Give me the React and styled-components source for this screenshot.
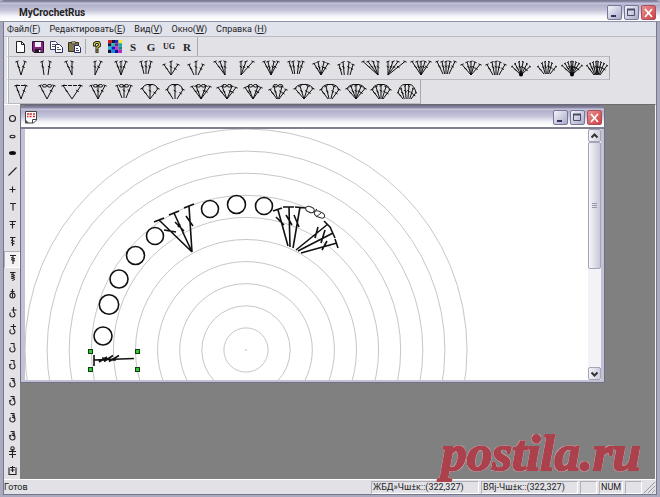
import React, { useState } from "react";
import styled, { createGlobalStyle, css } from "styled-components";

const FAN_ROW = [
  { tops: [-4, 4] },
  { tops: [-4, 4], gap: 2 },
  { tops: [-5, 1], apex: 1 },
  { tops: [-1, 5], apex: -1 },
  { tops: [-5, 0, 5] },
  { tops: [-5, 0, 5], gap: 2, short: true },
  { tops: [-7, 0, 7], arc: 3 },
  { tops: [-7, 0, 7], arc: 3, gap: 2 },
  { tops: [-6, -1, 4], apex: 4 },
  { tops: [-5, 0, 7], apex: -5 },
  { tops: [-7, -3, 3, 7] },
  { tops: [-7, -3, 3, 7], gap: 3, short: true },
  { tops: [-7, -3, 3, 7], arc: 2 },
  { tops: [-7, -3, 3, 7], gap: 4, arc: 3 },
  { tops: [-8, -3, 2, 7], apex: 7 },
  { tops: [-8, -3, 2, 9], apex: -8 },
  { tops: [-9, -4, 0, 4, 9] },
  { tops: [-9, -4, 0, 4, 9], gap: 3, short: true },
  { tops: [-9, -4, 0, 4, 9], arc: 3 },
  { tops: [-9, -4, 0, 4, 9], arc: 3, gap: 3 },
  { tops: [-9, -6, -2, 2, 6, 9], arc: 5, blob: true },
  { tops: [-9, -5, -2, 2, 5, 9], arc: 5, gap: 3, short: true },
  { tops: [-10, -7, -4, -1, 1, 4, 7, 10], arc: 4, blob: true },
  { tops: [-10, -7, -4, -1, 1, 4, 7, 10], arc: 4, gap: 3 },
];

const SHELL_ROW = [
  { tops: [-5, 5], roof: "flat" },
  { tops: [-7, 7], roof: "ovals" },
  { tops: [-9, 9], roof: "flat" },
  { tops: [-7, 0, 7], roof: "ovals" },
  { tops: [-7, 0, 7], roof: "ovals", gap: 2, short: true },
  { tops: [-8, 0, 8], roof: "arc", arc: 3 },
  { tops: [-8, 0, 8], roof: "arc", arc: 4, gap: 2 },
  { tops: [-9, -5, 5, 9], roof: "ovals", arc: 1 },
  { tops: [-9, -5, 5, 9], roof: "ovals", arc: 2 },
  { tops: [-8, -5, 5, 8], roof: "ovals", arc: 2 },
  { tops: [-8, -4, 4, 8], roof: "ovals", arc: 4, gap: 1 },
  { tops: [-9, -4, 4, 9], roof: "arc", arc: 3 },
  { tops: [-9, -4, 4, 9], roof: "arc", arc: 4, gap: 2 },
  { tops: [-9, -5, 0, 5, 9], roof: "arc", arc: 3 },
  { tops: [-9, -5, 0, 5, 9], roof: "arc", arc: 4, gap: 2 },
  { tops: [-9, -6, -2, 2, 6, 9], roof: "arc", arc: 7, gap: 4 },
];

const STITCHES = [
  "chain",
  "slip",
  "solid",
  "slash",
  "single",
  "half",
  "double",
  "treble",
  "treble2",
  "treble3",
  "ring",
  "hook1",
  "hook2",
  "hook3",
  "hook4",
  "hook5",
  "hook6",
  "hook7",
  "hook8",
  "cross",
  "cup",
];

const MENU = [
  ["Файл(", "F", ")"],
  ["Редактировать(", "E", ")"],
  ["Вид(", "V", ")"],
  ["Окно(", "W", ")"],
  ["Справка (", "H", ")"],
];

const CHAINS = [
  [103, 336, 9],
  [109, 304.5, 9.7],
  [119, 279, 9],
  [135.5, 255.5, 9],
  [155, 236, 8.5],
  [210, 209, 8.5],
  [236.5, 204.5, 9],
  [264, 206, 8.5],
];

const Fan = ({ tops, apex = 0, gap = 0, arc = 0, short, blob, roof }) => {
  const widest = Math.max(...tops.map(Math.abs));
  const base = short ? 17 : 18;
  const top = (x) => 4.5 + arc * (x / widest) ** 2;
  return (
    <svg width="24" height="22" viewBox="-12 0 24 22" aria-hidden="true">
      <g fill="none" stroke="#111" strokeWidth="1">
        {tops.map((x) => {
          const bx = apex + (gap * x) / widest;
          const y = top(x);
          const mx = (x * 3 + bx * 2) / 5;
          const my = (y * 3 + base * 2) / 5;
          const cap = tops.length > 5 ? 1 : 1.6;
          return (
            <g key={x}>
              <path d={`M${bx} ${base}L${x} ${y}`} />
              <path
                d={`M${x - cap} ${y + (x > 0 ? -0.6 : 0.6)}L${x + cap} ${
                  y + (x > 0 ? 0.6 : -0.6)
                }`}
              />
              <path d={`M${mx - 1.3} ${my - 0.8}l2.6 1.6`} />
            </g>
          );
        })}
        {roof === "flat" && (
          <path d={`M${-widest} 4.500H${widest}`} strokeDasharray="4 1" />
        )}
        {roof === "ovals" && (
          <>
            <ellipse cx="-2.500" cy="4.800" rx="2.200" ry="1.300" />
            <ellipse cx="2.500" cy="4.800" rx="2.200" ry="1.300" />
          </>
        )}
        {roof === "arc" && (
          <path
            d={`M${-widest} ${4.5 + arc}Q${-widest + 2} 4 -3 3.500H3Q${
              widest - 2
            } 4 ${widest} ${4.5 + arc}`}
          />
        )}
      </g>
      {blob && <circle cx="0" cy="17.500" r="2" fill="#000" />}
    </svg>
  );
};

const hookPath = (n) => {
  const bowl = "C12 10 11 13 8.500 13C6 13 5 10.500 6.500 8.500";
  if (n < 3) {
    return `M9.500 3V8${bowl}M${n === 1 ? "7.500 6H12.500" : "6.500 5.500H12"}`;
  }
  const ticks = Math.ceil(n / 2) - 1;
  let d = `M6.500 4.500H10.500M10 4.500V8${bowl}`;
  for (let i = 1; i < ticks; i++) d += `M8 ${4 + i * 2}l3 1.500`;
  if (n % 2 === 0) d += "M5 9l2.500-1";
  return d;
};

const STITCH_PATHS = {
  slash: "M4.500 12.500L12.500 4.500",
  single: "M5.500 8.500H11.500M8.500 5.500V11.500",
  half: "M6 5.500H12M9 5.500V12.500",
  double: "M5.500 5.500H12M8.500 5.500V12.500M6 8.500H11",
  treble: "M6 4.500H11.500M8.500 4.500V13M7 7L10.500 8.500M7 9.500L10.500 11",
  treble2: "M6 4.500H12M9 4.500V13M7 6.500L11 8M7 8.500L11 10",
  treble3: "M6 4.500H11.500M9 4.500V13M7 6L11 7.500M7 8L11 9.500M7 10L11 11.500",
  cross: "M8.500 5V14M5 7.500H12M5 10.500H12",
  cup: "M5 5.500V12.500H12V5.500M6 5.500H11M8.500 4V10M6.500 8H10.500",
};

const Stitch = ({ kind }) => (
  <svg width="17" height="17" viewBox="0 0 17 17" aria-hidden="true">
    <g fill="none" stroke="#222" strokeWidth="1.100">
      {kind === "chain" && <circle cx="8.500" cy="8.500" r="3" />}
      {kind === "slip" && <ellipse cx="8.500" cy="8.500" rx="2.500" ry="1.300" />}
      {kind === "solid" && (
        <ellipse cx="8.500" cy="8" rx="3" ry="1.500" fill="#000" />
      )}
      {kind === "ring" && (
        <>
          <circle cx="8.500" cy="9.500" r="2.500" />
          <path d="M8.500 3V11.500M6.500 5.500H10.500" />
        </>
      )}
      {kind === "cross" && <circle cx="8.500" cy="4.500" r="1.700" />}
      {kind.startsWith("hook") && <path d={hookPath(Number(kind[4]))} />}
      {STITCH_PATHS[kind] && <path d={STITCH_PATHS[kind]} />}
    </g>
  </svg>
);

const NewIcon = () => (
  <svg width="12" height="12" viewBox="0 0 12 12" aria-hidden="true">
    <path d="M2.500 .5h5l3 3v8h-8z" fill="#fff" stroke="#222" />
    <path d="M7.500 .5v3h3" fill="none" stroke="#222" />
  </svg>
);

const SaveIcon = () => (
  <svg width="12" height="12" viewBox="0 0 12 12" aria-hidden="true">
    <path d="M.5.5h11v11H2L.5 10z" fill="#8a1f86" stroke="#26152e" />
    <path d="M3 1h6v5H3z" fill="#f4eef4" />
    <path d="M3 8h6v3H3z" fill="#1b1b1b" />
    <path d="M7 9h1.500v2H7z" fill="#fff" />
  </svg>
);

const CopyIcon = () => (
  <svg width="13" height="12" viewBox="0 0 13 12" aria-hidden="true">
    <path d="M.5 .5h5l2 2v6h-7z" fill="#fff" stroke="#333a66" />
    <path d="M5.500 3.500h4l3 3v5h-7z" fill="#fff" stroke="#252b66" />
    <path d="M2 3.500h3M2 5.500h3M7 6.500h2M7 8.500h4" stroke="#555" />
  </svg>
);

const PasteIcon = () => (
  <svg width="13" height="12" viewBox="0 0 13 12" aria-hidden="true">
    <path d="M.5 1.500h10v9h-10z" fill="#80774d" stroke="#33301e" />
    <path d="M3.500 .8h4v2h-4z" fill="#ddd58e" stroke="#333" strokeWidth=".8" />
    <path d="M6.500 4.500h4l2 2v5h-6z" fill="#fff" stroke="#252b66" />
    <path d="M8 7.500h2M8 9.500h3" stroke="#3a4070" />
  </svg>
);

const HelpIcon = () => (
  <svg width="10" height="12" viewBox="0 0 10 12" aria-hidden="true">
    <g fill="none" strokeLinecap="square">
      <path d="M2.500 4V2.500L4 1.500h2.500L7.500 3v1.500L5 6.500V8" stroke="#222" strokeWidth="3" />
      <path d="M2.500 4V2.500L4 1.500h2.500L7.500 3v1.500L5 6.500V8" stroke="#d9cf3a" strokeWidth="1.200" />
    </g>
    <path d="M3.500 9.300h3V12h-3z" fill="#222" />
    <path d="M4.500 9.800h1v1.500h-1z" fill="#d9cf3a" />
  </svg>
);

const SWATCHES = [
  "#e01818", "#1a1030", "#2424d8", "#f4f020",
  "#10104a", "#18c8b0", "#7a2090", "#1ba8a0",
  "#12c0d8", "#1818c0", "#d030d0", "#168a80",
  "#101038", "#1c8ae0", "#101090", "#c020c8",
];

const PaletteIcon = () => (
  <svg width="14" height="13" viewBox="0 0 4 4" preserveAspectRatio="none" aria-hidden="true">
    {SWATCHES.map((fill, i) => (
      <rect key={i} x={i % 4} y={Math.floor(i / 4)} width="1" height="1" fill={fill} />
    ))}
  </svg>
);

const DocIcon = () => (
  <svg width="12" height="13" viewBox="0 0 12 13" aria-hidden="true">
    <path d="M.5.500h11v8.500l-3 3h-8z" fill="#fff" stroke="#444" />
    <path d="M2 3h2.500M5 3h2M8 3h2M2 5.500h1.500M4.500 5.500h2M8 5.500h2" stroke="#d02c2c" strokeWidth="1.500" />
    <path d="M11 8.500H7.500V12" fill="none" stroke="#444" />
    <path d="M1 9l3 3h-3z" fill="#555" />
  </svg>
);

const lines = (list) => list.map(([a, b, c, d]) => `M${a} ${b}L${c} ${d}`).join("");

const LEFT_SHELL = lines([
  [192, 252, 159, 220], [192, 252, 174, 213], [192, 252, 189, 206],
  [154, 222, 164, 218], [169, 215, 179, 211], [184, 208, 194, 204],
  [164, 230, 176, 232], [175, 222, 184, 231], [186, 216, 193, 226],
  [180, 224, 178, 227],
]);

const RIGHT_SHELL = lines([
  [288, 246, 278, 210], [290, 247, 289, 207], [293, 248, 300, 207],
  [273, 211, 282, 208], [283, 207, 294, 207], [295, 207, 306, 208],
  [276, 217, 284, 225], [286, 215, 292, 225], [294, 215, 299, 227],
  [296, 250, 328, 224], [298, 251, 333, 233], [301, 253, 337, 243],
  [324, 221, 331, 228], [330, 227, 335, 238], [335, 239, 338, 248],
  [318, 227, 315, 238], [325, 230, 321, 243], [327, 241, 322, 250],
]);

const SELECTED = lines([
  [94, 355, 94, 366], [94, 360, 134, 358.5],
  [99, 362, 107, 357], [104, 361.5, 113, 355.5], [109, 361.5, 119, 355.5],
  [102, 358, 116, 360],
]);

const Pattern = () => (
  <svg width="563" height="251" viewBox="25 129 563 251" role="img" aria-label="Узор">
    <g fill="none" stroke="#c6c6c6" strokeWidth="1">
      {Array.from({ length: 10 }, (_, i) => (
        <circle key={i} cx="246" cy="350" r={(i + 1) * 22.1} />
      ))}
    </g>
    <path d="M245 350h2" stroke="#bbb" />
    <g fill="none" stroke="#111" strokeWidth="1.600">
      {CHAINS.map(([cx, cy, r]) => (
        <circle key={cx} cx={cx} cy={cy} r={r} />
      ))}
      <path d={LEFT_SHELL} />
      <path d={RIGHT_SHELL} />
      <path d={SELECTED} />
    </g>
    <g fill="#fff" stroke="#333" strokeWidth="1">
      <ellipse cx="310" cy="209.500" rx="4.500" ry="2.800" transform="rotate(25 310 209.500)" />
      <ellipse cx="319.500" cy="214.500" rx="5.500" ry="2.800" transform="rotate(25 319.500 214.500)" />
      <path d="M312 213l5-4M316 217l5-4" />
    </g>
    {[[90, 351], [137, 351], [90, 369], [137, 369]].map(([x, y]) => (
      <rect key={`${x}-${y}`} x={x - 1.5} y={y - 1.5} width="4" height="4" fill="#2fc82f" stroke="#123f12" />
    ))}
  </svg>
);

const Controls = () => (
  <ControlGroup>
    <ControlButton type="button" aria-label="Свернуть">
      <svg width="15" height="14" viewBox="0 0 15 14"><path d="M4 10h5" stroke="#34345a" strokeWidth="2" /></svg>
    </ControlButton>
    <ControlButton type="button" aria-label="Развернуть">
      <svg width="15" height="14" viewBox="0 0 15 14"><path d="M3.500 3.500h7v6h-7z" fill="none" stroke="#4c4c68" /><path d="M3 3.500h8" stroke="#4c4c68" strokeWidth="2" /></svg>
    </ControlButton>
    <ControlButton type="button" aria-label="Закрыть" $close>
      <svg width="15" height="14" viewBox="0 0 15 14"><path d="M4 3l7 8M11 3l-7 8" stroke="#fff" strokeWidth="1.700" /></svg>
    </ControlButton>
  </ControlGroup>
);

const App = () => {
  const [stitch, setStitch] = useState("treble2");
  return (
    <>
      <GlobalStyle />
      <Frame>
        <TitleBar>
          <Title>MyCrochetRus</Title>
          <Controls />
        </TitleBar>
        <Body>
          <MenuBar>
            {MENU.map(([before, key, after]) => (
              <MenuItem type="button" key={before}>
                {before}
                <u>{key}</u>
                {after}
              </MenuItem>
            ))}
          </MenuBar>
          <MainTools>
            <Tool type="button" aria-label="Создать"><NewIcon /></Tool>
            <Tool type="button" aria-label="Сохранить"><SaveIcon /></Tool>
            <Tool type="button" aria-label="Копировать"><CopyIcon /></Tool>
            <Tool type="button" aria-label="Вставить"><PasteIcon /></Tool>
            <Divider />
            <Tool type="button" aria-label="Справка"><HelpIcon /></Tool>
            <Tool type="button" aria-label="Цвет"><PaletteIcon /></Tool>
            <Tool type="button">S</Tool>
            <Tool type="button">G</Tool>
            <Tool type="button" $small>UG</Tool>
            <Tool type="button">R</Tool>
          </MainTools>
          <FanTools $width={603}>
            {FAN_ROW.map((fan, i) => (
              <FanButton type="button" key={i} aria-label={`Веер ${i + 1}`}>
                <Fan {...fan} />
              </FanButton>
            ))}
          </FanTools>
          <FanTools $width={414}>
            {SHELL_ROW.map((fan, i) => (
              <FanButton type="button" key={i} aria-label={`Ракушка ${i + 1}`}>
                <Fan {...fan} />
              </FanButton>
            ))}
          </FanTools>
          <Main>
            <SideBar>
              {STITCHES.map((kind, i) => (
                <StitchButton
                  type="button"
                  key={kind}
                  aria-label={`Петля ${i + 1}`}
                  aria-pressed={stitch === kind}
                  $active={stitch === kind}
                  onClick={() => setStitch(kind)}
                >
                  <Stitch kind={kind} />
                </StitchButton>
              ))}
            </SideBar>
            <Desktop>
              <ChildWindow>
                <ChildTitle>
                  <DocIcon />
                  <Controls />
                </ChildTitle>
                <Document>
                  <Canvas>
                    <Pattern />
                  </Canvas>
                  <ScrollBar>
                    <ScrollButton type="button" aria-label="Вверх">
                      <svg width="9" height="8" viewBox="0 0 9 8"><path d="M1.500 5.500l3-3 3 3" fill="none" stroke="#333" strokeWidth="2" /></svg>
                    </ScrollButton>
                    <Thumb>
                      <Grip />
                    </Thumb>
                    <ScrollButton type="button" aria-label="Вниз">
                      <svg width="9" height="8" viewBox="0 0 9 8"><path d="M1.500 2.500l3 3 3-3" fill="none" stroke="#333" strokeWidth="2" /></svg>
                    </ScrollButton>
                  </ScrollBar>
                </Document>
              </ChildWindow>
            </Desktop>
          </Main>
          <StatusBar>
            <Ready>Готов</Ready>
            <Pane $width={108}>ЖБД»Чш±к::(322,327)</Pane>
            <Pane $width={97}>ВЯј-Чш±к::(322,327)</Pane>
            <Pane $width={17} />
            <Pane $width={24}>NUM</Pane>
            <Pane $width={17} />
            <svg width="11" height="12" viewBox="0 0 11 12" aria-hidden="true">
              <path d="M0 12L11 1M4 12l7-7M8 12l3-3" stroke="#9a9aa6" />
            </svg>
          </StatusBar>
        </Body>
        <Watermark>postila.ru</Watermark>
      </Frame>
    </>
  );
};

export default App;

const GlobalStyle = createGlobalStyle`
  * {
    box-sizing: border-box;
  }
  body {
    margin: 0;
    font-family: Roboto, "Liberation Sans", sans-serif;
    font-size: 9px;
    color: #222;
  }
  button {
    margin: 0;
    padding: 0;
    border: 0;
    background: none;
    font: inherit;
    color: inherit;
  }
  svg {
    display: block;
    flex: none;
  }
`;

const barGradient = css`
  background: linear-gradient(
    #77758e 0,
    #8f8dab 2px,
    #c8c8dc 3px,
    #b1b0cb 5px,
    #c3c3d8 10px,
    #f4f4fa 16px,
    #ffffff 20px
  );
`;

const Frame = styled.div`
  position: relative;
  display: flex;
  flex-direction: column;
  min-height: 100vh;
  background: #a9a9c0;
`;

const TitleBar = styled.header`
  display: flex;
  align-items: center;
  justify-content: space-between;
  height: 22px;
  padding: 4px 4px 0 19px;
  border-bottom: 1px solid #8c8fa6;
  border-radius: 5px 5px 0 0;
  ${barGradient}
`;

const Title = styled.h1`
  margin: 0;
  font-size: 10px;
  font-weight: bold;
  line-height: 16px;
`;

const ControlGroup = styled.div`
  display: flex;
  gap: 2px;
`;

const ControlButton = styled.button`
  width: 15px;
  height: 15px;
  overflow: hidden;
  border: 1px solid ${({ $close }) => ($close ? "#a85060" : "#77779a")};
  border-radius: 2px;
  background: ${({ $close }) =>
    $close
      ? "linear-gradient(135deg, #e89090, #cf3f40)"
      : "linear-gradient(135deg, #f4f4fb, #a9a9c8)"};
  svg {
    margin: -1px;
  }
`;

const Body = styled.div`
  display: flex;
  flex: 1;
  flex-direction: column;
  margin: 0 3px 2px;
  border: 1px solid #77778c;
  border-top: 0;
  background: #e1e1e6;
`;

const MenuBar = styled.nav`
  display: flex;
  gap: 9px;
  height: 15px;
  padding-left: 3px;
  border-bottom: 1px solid #b9bac4;
  background: #e0e3ec;
`;

const MenuItem = styled.button`
  line-height: 14px;
`;

const toolStrip = css`
  display: flex;
  align-items: center;
  border-right: 1px solid #a9a9b0;
  border-bottom: 1px solid #b9b9c0;
  border-left: 1px solid #fff;
  box-shadow: inset 1px 0 #b4b4bc;
`;

const MainTools = styled.div`
  ${toolStrip}
  align-self: flex-start;
  height: 19px;
  margin-left: 3px;
  padding: 0 1px 0 3px;
  border-bottom: 0;
`;

const Tool = styled.button`
  display: flex;
  align-items: center;
  justify-content: center;
  width: 18px;
  height: 18px;
  font-family: "Liberation Serif", serif;
  font-size: ${({ $small }) => ($small ? "8px" : "11px")};
  font-weight: bold;
`;

const Divider = styled.span`
  width: 1px;
  height: 15px;
  margin: 0 2px;
  background: #a9a9b0;
`;

const FanTools = styled.div`
  ${toolStrip}
  width: ${({ $width }) => $width}px;
  max-width: 100%;
  height: 24px;
  margin-left: 3px;
  border-top: 1px solid #b9b9c0;
  & + & {
    border-top: 0;
  }
`;

const FanButton = styled.button`
  display: flex;
  flex: 1;
  justify-content: center;
  min-width: 0;
`;

const Main = styled.main`
  display: flex;
  flex: 1;
`;

const SideBar = styled.div`
  display: flex;
  flex-direction: column;
  width: 16px;
  padding-top: 5px;
  border-top: 1px solid #fff;
`;

const StitchButton = styled.button`
  display: flex;
  flex: 1;
  align-items: center;
  justify-content: center;
  height: 17px;
  ${({ $active }) =>
    $active &&
    css`
      background: #f3f3f5;
      box-shadow: inset 1px 1px #b0b0b6, inset -1px -1px #fff;
    `}
`;

const Desktop = styled.div`
  position: relative;
  flex: 1;
  border-top: 1px solid #6a6a70;
  border-right: 1px solid #f4f4f6;
  background: #808080;
`;

const ChildWindow = styled.section`
  position: absolute;
  top: 0;
  left: 0;
  width: 585px;
  padding: 0 3px 2px 4px;
  border: 1px solid #6f6f88;
  border-radius: 5px 5px 0 0;
  background: #c2c2d4;
  overflow: hidden;
`;

const ChildTitle = styled.header`
  display: flex;
  align-items: center;
  justify-content: space-between;
  height: 23px;
  margin: 0 -3px 0 -4px;
  padding: 2px 2px 0 4px;
  border-bottom: 2px solid #808092;
  ${barGradient}
`;

const Document = styled.div`
  display: flex;
  background: #fff;
`;

const Canvas = styled.div`
  flex: 1;
  overflow: hidden;
`;

const ScrollBar = styled.div`
  display: flex;
  flex-direction: column;
  width: 13px;
  background: #f3f3f7;
`;

const ScrollButton = styled.button`
  display: flex;
  align-items: center;
  justify-content: center;
  height: 13px;
  border: 1px solid #a4a4b8;
  border-radius: 2px;
  background: linear-gradient(90deg, #f2f2f8, #cfcfde);
`;

const Thumb = styled.div`
  display: flex;
  align-items: center;
  justify-content: center;
  height: 127px;
  margin-bottom: auto;
  border: 1px solid #a4a4b8;
  border-radius: 2px;
  background: linear-gradient(90deg, #f6f6fa, #c8c8da);
`;

const Grip = styled.span`
  width: 5px;
  height: 5px;
  background: repeating-linear-gradient(#9696aa 0 1px, transparent 1px 2px);
`;

const StatusBar = styled.footer`
  display: flex;
  align-items: center;
  gap: 2px;
  height: 15px;
  padding-right: 1px;
  border-top: 1px solid #fff;
`;

const Ready = styled.span`
  flex: 1;
`;

const Pane = styled.span`
  width: ${({ $width }) => $width}px;
  height: 13px;
  padding-left: 1px;
  border: 1px solid #fff;
  border-top-color: #b0b0b8;
  border-left-color: #b0b0b8;
  line-height: 11px;
  white-space: nowrap;
`;

const Watermark = styled.span`
  position: absolute;
  right: 19px;
  bottom: 12px;
  color: #ab414c;
  font: italic bold 51px/64px "Liberation Serif", serif;
  -webkit-text-stroke: 2px #ab414c;
  text-shadow: 1px 1px #ddc6c9, -1px -1px #ddc6c9, 1px -1px #ddc6c9, -1px 1px #ddc6c9;
  pointer-events: none;
`;
